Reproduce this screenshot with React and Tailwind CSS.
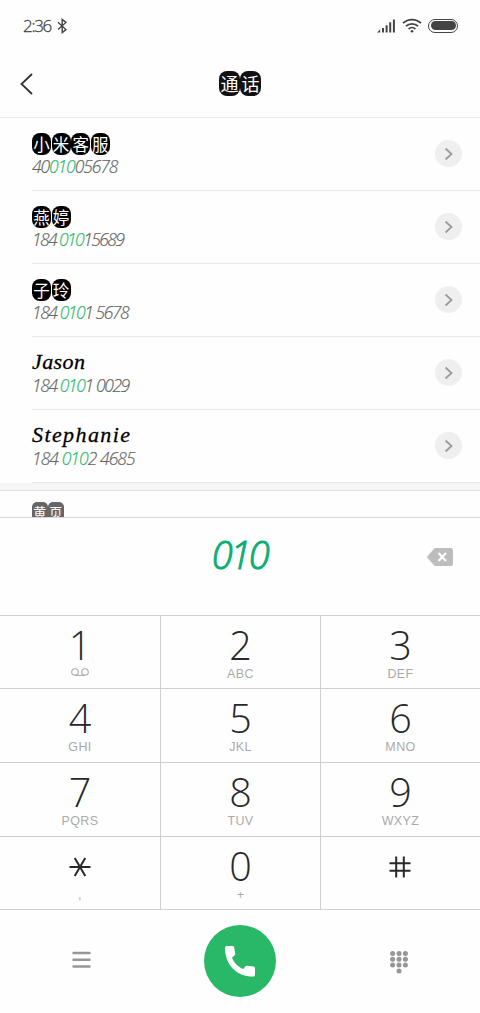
const contacts = [
  { chips: "小米客服", before: "40", match: "010", after: "05678", tracking: "tracking-[-1.1px]" },
  { chips: "燕婷", before: "184 ", match: "010", after: "15689", tracking: "tracking-[-1.6px]" },
  { chips: "子玲", before: "184 ", match: "010", after: "1 5678", tracking: "tracking-[-1.45px]" },
  { name: "Jason", before: "184 ", match: "010", after: "1 0029", tracking: "tracking-[-1.4px]" },
  { name: "Stephanie", before: "184 ", match: "010", after: "2 4685", tracking: "tracking-[-0.95px]" },
];

const keys = [
  { digit: "1", voicemail: true },
  { digit: "2", label: "ABC" },
  { digit: "3", label: "DEF" },
  { digit: "4", label: "GHI" },
  { digit: "5", label: "JKL" },
  { digit: "6", label: "MNO" },
  { digit: "7", label: "PQRS" },
  { digit: "8", label: "TUV" },
  { digit: "9", label: "WXYZ" },
  { digit: "*", label: "," },
  { digit: "0", label: "+" },
  { digit: "#" },
];

function Chips({ text, className }) {
  return (
    <div className="flex font-['Noto_Sans_CJK_SC',sans-serif]">
      {text.split("").map((char) => (
        <span key={char} className={`flex items-center justify-center text-white ${className}`}>
          {char}
        </span>
      ))}
    </div>
  );
}

function StatusBar() {
  return (
    <div className="flex h-[51px] items-center justify-between pl-[23px] pr-[22px] text-[#444]">
      <div className="flex items-center">
        <span className="w-[28px] font-['Open_Sans',sans-serif] text-[17px] font-light leading-[20px] tracking-[-1.3px] [-webkit-text-stroke:0.3px_#444]">
          2:36
        </span>
        <svg className="ml-[6px]" width="11" height="16" viewBox="0 0 11 16" fill="none" stroke="currentColor" strokeWidth="1.4">
          <path d="M1 4.2l8 7.4-3.8 3V1.4L9 4.4l-8 7.2" />
        </svg>
      </div>
      <div className="flex items-center">
        <svg width="19" height="14" viewBox="0 0 19 14" fill="currentColor">
          <path d="M0 13.5L3.2 10.5v3zM5 9h2v4.5H5zM8.6 6.2h2v7.3h-2zM12.2 3.2h2v10.3h-2zM15.9 0.6h2v12.900h-2z" />
        </svg>
        <svg className="ml-[6px]" width="20" height="15" viewBox="0 0 20 15" fill="none" stroke="currentColor" strokeWidth="1.8">
          <path d="M1 5.2c5-4.8 13-4.8 18 0M3.9 8.2c3.4-3.2 8.8-3.2 12.2 0M6.6 11c1.9-1.8 4.9-1.8 6.8 0" />
          <circle cx="10" cy="13.2" r="1.3" fill="currentColor" stroke="none" />
        </svg>
        <div className="ml-[6px] h-[14px] w-[30px] rounded-full border-[1.5px] border-[#444] p-[1.5px]">
          <div className="h-full rounded-full bg-[#444]" />
        </div>
      </div>
    </div>
  );
}

function ContactRow({ contact }) {
  return (
    <div className="ml-8 flex h-[73px] justify-between border-b border-[#e9e9e9] pr-[18px]">
      <div className="flex flex-col pt-[15px]">
        <div className="h-[22px]">
          {contact.chips ? (
            <Chips
              text={contact.chips}
              className="mr-[0.6px] h-[22px] w-[19px] rounded-[8px] bg-black text-[16.5px] leading-[22px]"
            />
          ) : (
            <span
              className={`block font-['Liberation_Serif',serif] text-[22px] italic leading-[20px] text-black [-webkit-text-stroke:0.3px_black] ${
                contact.name === "Jason" ? "tracking-[0.4px]" : "tracking-[1.4px]"
              }`}
            >
              {contact.name}
            </span>
          )}
        </div>
        <p
          className={`whitespace-pre font-['Open_Sans',sans-serif] text-[17.5px] font-light italic leading-[22px] text-[#666] [-webkit-text-stroke:0.2px] ${contact.tracking}`}
        >
          {contact.before}
          <span className="text-[#2dba6c]">{contact.match}</span>
          {contact.after}
        </p>
      </div>
      <div className="mt-[22px] flex h-[27px] w-[27px] items-center justify-center rounded-full bg-[#efefef]">
        <svg width="9" height="14" viewBox="0 0 9 14" fill="none" stroke="#9b9b9b" strokeWidth="1.8">
          <path d="M1.5 1.5L7.5 7l-6 5.5" />
        </svg>
      </div>
    </div>
  );
}

function KeySymbol({ digit }) {
  if (digit === "*") {
    return (
      <svg className="mt-[2px]" width="22" height="20" viewBox="0 0 22 20" stroke="#292929" strokeWidth="2">
        <path d="M.5 10h21M5.7 1l10.6 18M16.3 1L5.7 19" />
      </svg>
    );
  }
  if (digit === "#") {
    return (
      <svg className="mr-[2px] mt-[2px]" width="22" height="22" viewBox="0 0 22 22" stroke="#292929" strokeWidth="2">
        <path d="M.5 7.2h21M.5 14.8h21M7.2.5v21M14.8.5v21" />
      </svg>
    );
  }
  return digit;
}

function Key({ item }) {
  return (
    <button type="button" className="flex flex-col items-center border-b border-r border-[#d0d0d0] pt-[8px]">
      <span className="flex h-[42px] items-center font-['Open_Sans',sans-serif] text-[39.5px] font-light leading-[40px] text-[#292929]">
        <KeySymbol digit={item.digit} />
      </span>
      <span className="flex h-[16px] items-center font-['Liberation_Sans',sans-serif] text-[12.5px] leading-[16px] tracking-[0.4px] text-[#aaa]">
        {item.voicemail ? (
          <svg className="-mt-[4px]" width="18" height="8" viewBox="0 0 18 8" fill="none" stroke="#aaa" strokeWidth="1.1">
            <circle cx="4" cy="4" r="3.3" />
            <circle cx="14" cy="4" r="3.3" />
            <path d="M4 7.3h10" />
          </svg>
        ) : (
          item.label
        )}
      </span>
    </button>
  );
}

function App() {
  return (
    <main className="flex h-[1013px] w-[480px] flex-col overflow-hidden bg-[#fefefe]">
      <StatusBar />

      <header className="grid h-[67px] grid-cols-3 items-center border-b border-[#ececec] px-5">
        <svg width="13" height="22" viewBox="0 0 13 22" fill="none" stroke="#333" strokeWidth="1.8">
          <path d="M12 1L1.5 11 12 21" />
        </svg>
        <h1 className="-mt-[2px] flex justify-center">
          <Chips text="通话" className="mx-[0.3px] h-[25px] w-[20.5px] rounded-[8px] bg-[#111] text-[18px] leading-[25px]" />
        </h1>
      </header>

      <section className="h-[399px] shrink-0 overflow-hidden">
        {contacts.map((contact) => (
          <ContactRow key={contact.after} contact={contact} />
        ))}
        <div className="h-[8px] border-b border-[#e0e0e0] bg-[#f6f6f6]" />
        <div className="pl-8 pt-[11px]">
          <Chips text="黄页" className="mr-[0.4px] h-[19px] w-[15.6px] rounded-[5px] bg-[#666] text-[13px] leading-[19px]" />
        </div>
      </section>

      <section className="grid h-[98px] shrink-0 grid-cols-[1fr_auto_1fr] items-center border-t border-[#d8d8d8] px-[27px] pb-[19px]">
        <p className="col-start-2 -mt-[6px] mr-[1px] font-['Open_Sans',sans-serif] text-[38px] font-light italic leading-[40px] tracking-[-2.4px] text-[#0bae73] [-webkit-text-stroke:1px_#0bae73]">
          010
        </p>
        <svg className="justify-self-end" width="26" height="18" viewBox="0 0 26 18">
          <path d="M8.5 0H24a2 2 0 0 1 2 2v14a2 2 0 0 1-2 2H8.5a2 2 0 0 1-1.5-.7L.6 10a1.5 1.5 0 0 1 0-2L7 .7A2 2 0 0 1 8.5 0z" fill="#bdbdbd" />
          <path d="M11.5 5l7.5 8M19 5l-7.5 8" stroke="#fff" strokeWidth="2.2" />
        </svg>
      </section>

      <section className="grid h-[294px] w-[481px] shrink-0 grid-cols-[161px_160px_160px] grid-rows-[73px_74px_74px_73px] border-t border-[#d0d0d0]">
        {keys.map((item) => (
          <Key key={item.digit} item={item} />
        ))}
      </section>

      <footer className="flex flex-1 items-start justify-between pl-[72px] pr-[72px] pt-[16px]">
        <svg className="mt-[26px]" width="19" height="18" viewBox="0 0 19 18" stroke="#969696" strokeWidth="2.4" strokeLinecap="round">
          <path d="M1.5 2h16M1.5 8.7h16M1.5 15.5h16" />
        </svg>
        <button type="button" className="-ml-[2px] flex h-[72px] w-[72px] items-center justify-center rounded-full bg-[#29b768]">
          <svg width="30" height="31" viewBox="0 0 30 31" fill="#fff">
            <path d="M1.5 0H7.6C8.6 0 9 .6 9.2 1.5L10.2 7.5C10.4 8.5 10 9 9.3 9.6L7 11.7C9 16.5 13 21 18.3 23L20.3 20.4C20.9 19.7 21.4 19.6 22.2 19.7L28.5 20.5C29.6 20.7 30 21.2 30 22V28.8C30 30 29.5 30.6 28.5 30.6C12 31 0 19 0 2C0 .7.5 0 1.5 0Z" />
          </svg>
        </button>
        <svg className="mt-[26px]" width="18" height="23" viewBox="0 0 18 23" fill="#969696">
          {[2.5, 8.3, 14].map((y) =>
            [2.6, 9, 15.4].map((x) => <circle key={`${x}-${y}`} cx={x} cy={y} r="2.5" />)
          )}
          <circle cx="9" cy="19.9" r="2.5" />
        </svg>
      </footer>
    </main>
  );
}

export default App;
